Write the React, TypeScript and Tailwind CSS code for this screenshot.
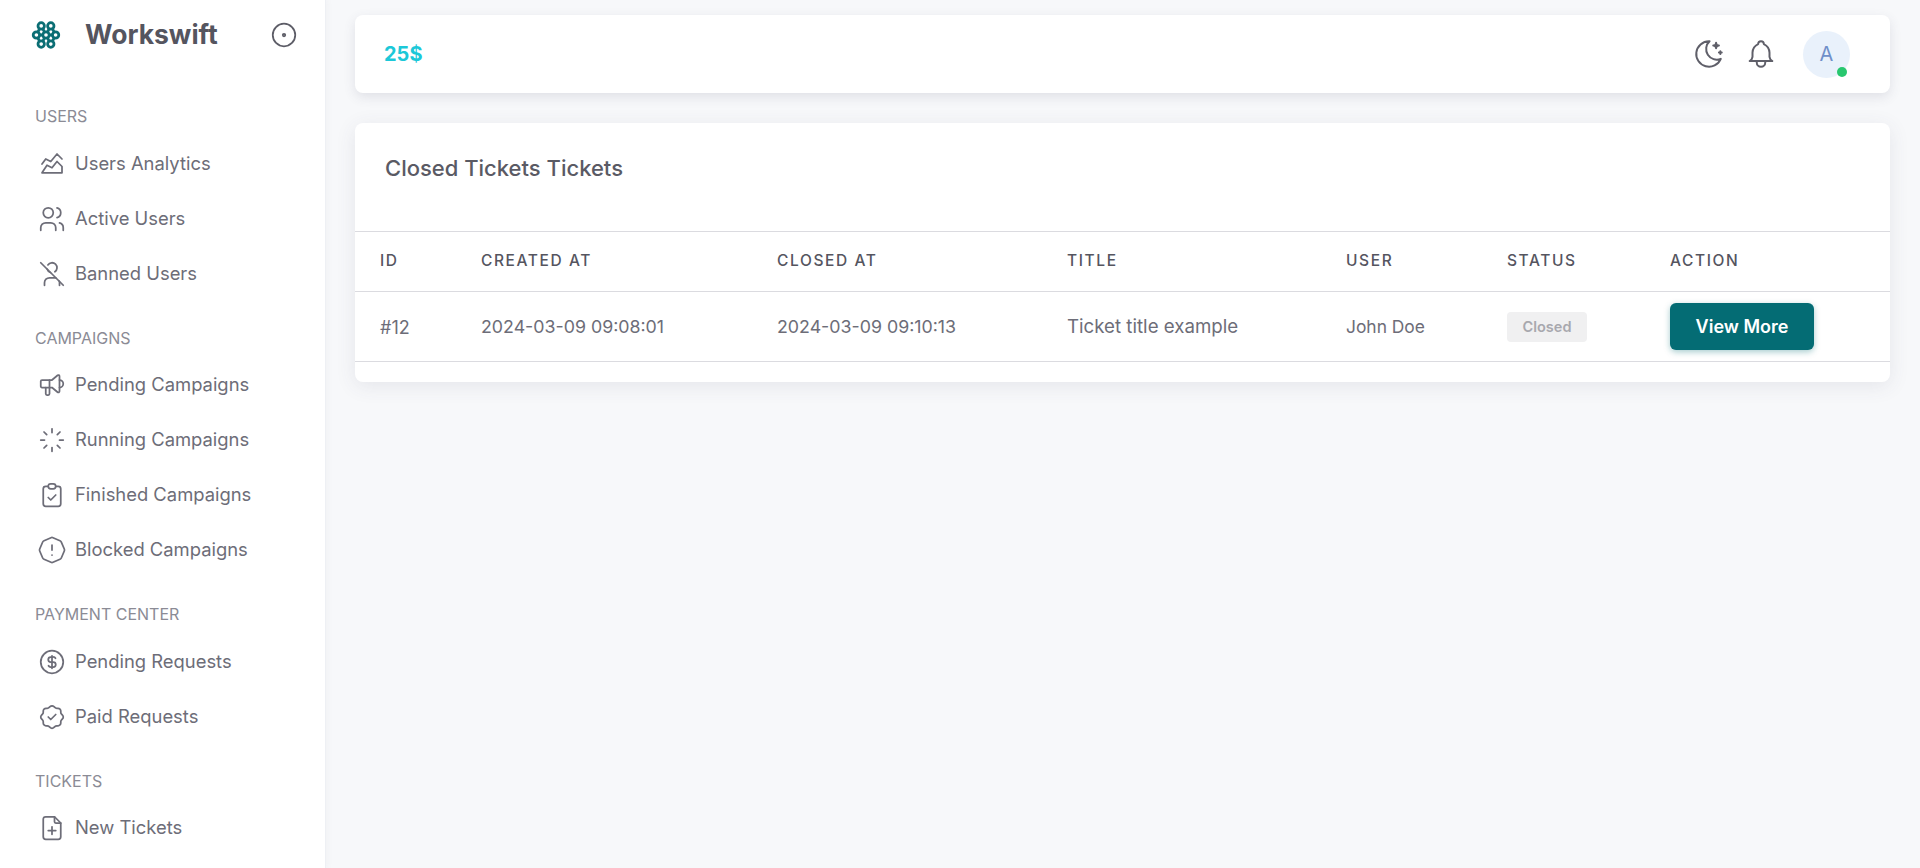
import type { IconType } from "react-icons";
import {
  TbAlertOctagon,
  TbBell,
  TbChartAreaLine,
  TbCircleDot,
  TbClipboardCheck,
  TbCoin,
  TbRosetteDiscountCheck,
  TbFilePlus,
  TbLoader,
  TbMoonStars,
  TbSpeakerphone,
  TbUserOff,
  TbUsers,
} from "react-icons/tb";

type NavGroup = {
  title: string;
  items: { label: string; icon: IconType }[];
};

const groups: NavGroup[] = [
  {
    title: "USERS",
    items: [
      { label: "Users Analytics", icon: TbChartAreaLine },
      { label: "Active Users", icon: TbUsers },
      { label: "Banned Users", icon: TbUserOff },
    ],
  },
  {
    title: "CAMPAIGNS",
    items: [
      { label: "Pending Campaigns", icon: TbSpeakerphone },
      { label: "Running Campaigns", icon: TbLoader },
      { label: "Finished Campaigns", icon: TbClipboardCheck },
      { label: "Blocked Campaigns", icon: TbAlertOctagon },
    ],
  },
  {
    title: "PAYMENT CENTER",
    items: [
      { label: "Pending Requests", icon: TbCoin },
      { label: "Paid Requests", icon: TbRosetteDiscountCheck },
    ],
  },
  {
    title: "TICKETS",
    items: [{ label: "New Tickets", icon: TbFilePlus }],
  },
];

const columns = [
  { label: "ID", width: "w-[101px]" },
  { label: "CREATED AT", width: "w-[296px]" },
  { label: "CLOSED AT", width: "w-[290px]" },
  { label: "TITLE", width: "w-[279px]" },
  { label: "USER", width: "w-[161px]" },
  { label: "STATUS", width: "w-[163px]" },
  { label: "ACTION", width: "" },
];

function Logo() {
  return (
    <svg width="32" height="32" viewBox="0 0 30 30" fill="none" stroke="#0b6e74" strokeWidth="2.6">
      <circle cx="10.5" cy="6.5" r="3" />
      <circle cx="19.5" cy="6.5" r="3" />
      <circle cx="6" cy="15" r="3" />
      <circle cx="15" cy="15" r="3" />
      <circle cx="24" cy="15" r="3" />
      <circle cx="10.5" cy="23.5" r="3" />
      <circle cx="19.5" cy="23.5" r="3" />
      <path d="M12 9l1.5 3M18 9l-1.5 3M12 21l1.5-3M18 21l-1.5-3M9 15h3M18 15h3M9 9l-1.5 3M21 9l1.5 3M9 21l-1.5-3M21 21l1.5-3" />
    </svg>
  );
}

function Sidebar() {
  return (
    <aside className="w-[326px] h-[868px] shrink-0 overflow-hidden bg-white border-r border-[#eef0f4] shadow-[0_0_8px_rgba(60,60,80,0.05)]">
      <div className="flex items-center h-[70px] pl-[30px] pr-[26px]">
        <Logo />
        <span className="ml-[23px] text-[26.5px] font-bold text-[#55555f]">Workswift</span>
        <TbCircleDot className="ml-auto text-[#5c5c66]" size={30} strokeWidth={1.4} />
      </div>
      <nav className="pl-[35px] pt-[36px]">
        {groups.map((group) => (
          <div key={group.title} className="mb-[26.5px]">
            <div className="h-[30px] text-[16px] leading-[20px] text-[#8b8b95]">{group.title}</div>
            {group.items.map((item) => (
              <div key={item.label} className="flex items-center h-[55px] pl-[2px] text-[#6d6d78]">
                <item.icon size={30} strokeWidth={1.4} className="shrink-0" />
                <span className="ml-[8px] text-[18.4px]">{item.label}</span>
              </div>
            ))}
          </div>
        ))}
      </nav>
    </aside>
  );
}

function TopBar() {
  return (
    <header className="flex items-center h-[78px] pl-[29px] pr-[40px] bg-white rounded-lg shadow-[0_4px_12px_rgba(70,70,100,0.13)]">
      <span className="text-[20px] font-bold text-[#1cc8d8]">25$</span>
      <div className="ml-auto flex items-center gap-[18px] text-[#5f5f69]">
        <TbMoonStars size={34} strokeWidth={1.4} />
        <TbBell size={34} strokeWidth={1.4} />
        <div className="relative ml-[7px] flex items-center justify-center w-[47px] h-[47px] rounded-full bg-[#e9f1fb] text-[20px] text-[#6f8fc9]">
          A
          <span className="absolute right-[3px] bottom-[1px] w-[10px] h-[10px] rounded-full bg-[#28c76f]" />
        </div>
      </div>
    </header>
  );
}

function TicketsCard() {
  return (
    <section className="mt-[30px] bg-white rounded-lg shadow-[0_4px_20px_rgba(70,70,100,0.1)] pb-[20px]">
      <h2 className="h-[108px] pl-[30px] pt-[31px] text-[22px] leading-[28px] font-medium text-[#5a5a64]">
        Closed Tickets Tickets
      </h2>
      <table className="w-full table-fixed border-collapse">
        <thead>
          <tr className="h-[60px] border-y border-[#dbdbe0]">
            {columns.map((col) => (
              <th
                key={col.label}
                className={`${col.width} pl-[25px] pb-[2px] text-left text-[15.5px] font-medium tracking-[1.6px] text-[#55555f]`}
              >
                {col.label}
              </th>
            ))}
          </tr>
        </thead>
        <tbody>
          <tr className="h-[70px] border-b border-[#dbdbe0] text-[18px] text-[#6d6d78]">
            <td className="pl-[25px] pt-[2px]">#12</td>
            <td className="pl-[25px] pt-[2px] text-[17.8px]">2024-03-09 09:08:01</td>
            <td className="pl-[25px] pt-[2px] text-[17.8px]">2024-03-09 09:10:13</td>
            <td className="pl-[25px] pt-[2px] text-[18.7px]">Ticket title example</td>
            <td className="pl-[25px] pt-[2px] text-[17.4px]">John Doe</td>
            <td className="pl-[25px]">
              <span className="inline-flex items-center justify-center w-[80px] h-[30px] rounded bg-[#f0f0f1] text-[14.5px] font-semibold text-[#a8a8ae]">
                Closed
              </span>
            </td>
            <td className="pl-[25px]">
              <button className="w-[144px] h-[47px] rounded-md bg-[#046c74] text-[18px] font-semibold text-white shadow-[0_2px_6px_rgba(4,108,116,0.35)]">
                View More
              </button>
            </td>
          </tr>
        </tbody>
      </table>
    </section>
  );
}

export default function App() {
  return (
    <div className="flex h-[868px] overflow-hidden bg-[#f7f8fa] font-['Inter','Liberation_Sans',sans-serif]">
      <Sidebar />
      <main className="flex-1 pt-[15px] pl-[29px] pr-[30px]">
        <TopBar />
        <TicketsCard />
      </main>
    </div>
  );
}
